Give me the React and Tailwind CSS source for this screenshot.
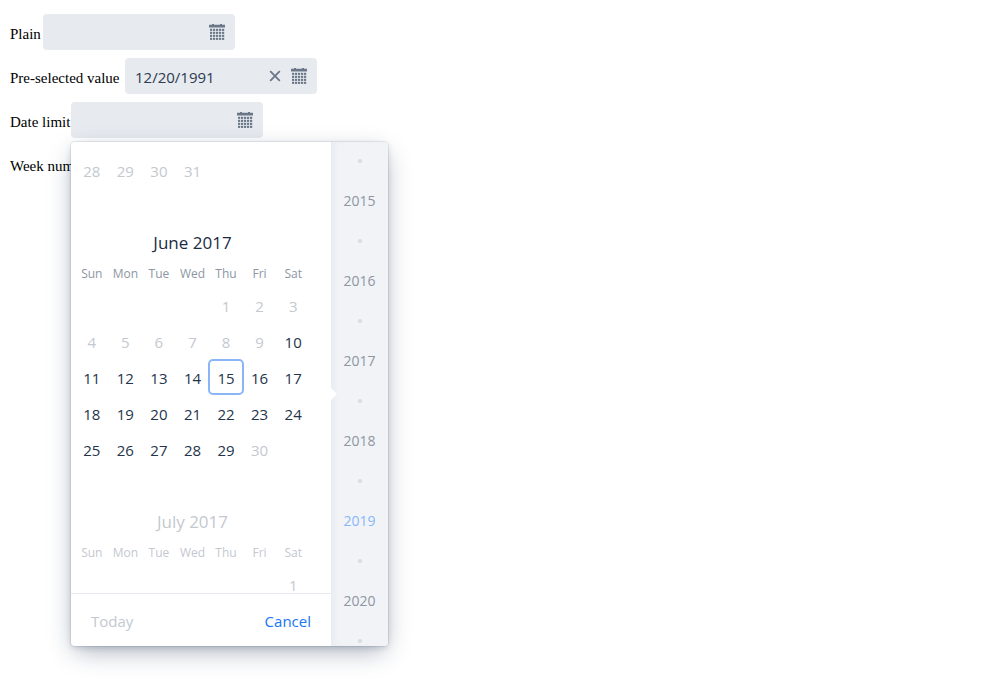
import { useState } from "react";

const WEEKDAYS = ["Sun", "Mon", "Tue", "Wed", "Thu", "Fri", "Sat"];

const MAY = [[28, 29, 30, 31, null, null, null]];
const JUNE = [
  [null, null, null, null, 1, 2, 3],
  [4, 5, 6, 7, 8, 9, 10],
  [11, 12, 13, 14, 15, 16, 17],
  [18, 19, 20, 21, 22, 23, 24],
  [25, 26, 27, 28, 29, 30, null],
];
const JULY = [[null, null, null, null, null, null, 1]];
const YEARS = [2015, 2016, 2017, 2018, 2019, 2020];

function CalendarIcon() {
  const cols = [1, 4, 7, 10, 13];
  const rows = [4.8, 7.8, 10.8, 13.8];
  return (
    <svg width="16" height="16" viewBox="0 0 16 16" fill="currentColor" aria-hidden="true">
      <path d="M0 .8h3V0h2v.8h6V0h2v.8h3v2.8H0z" />
      {rows.map((y) => cols.map((x) => <rect key={`${x}-${y}`} x={x} y={y} width="2.2" height="2.1" />))}
    </svg>
  );
}

function DateField({ id, label, labelWidth, initial = "", children }) {
  const [value, setValue] = useState(initial);
  return (
    <div className="flex items-baseline gap-1">
      <label
        htmlFor={id}
        className={`whitespace-nowrap font-['Liberation_Serif',serif] text-[15px] leading-5 text-black ${labelWidth}`}
      >
        {label}
      </label>
      <div className="relative flex h-9 w-48 items-center rounded bg-[#e7eaef] px-2.5 text-[#6b7789]">
        <input
          id={id}
          type="text"
          value={value}
          onChange={(e) => setValue(e.target.value)}
          className="min-w-0 flex-1 bg-transparent pt-0.5 text-[15px] leading-6 text-[#2c3b50] outline-none"
        />
        {value && (
          <button type="button" aria-label="Clear" onClick={() => setValue("")} className="mr-2.5">
            <svg width="12" height="12" viewBox="0 0 12 12" fill="none" stroke="currentColor" strokeWidth="1.8" aria-hidden="true">
              <path d="M1.2 1.2l9.6 9.6M10.8 1.2l-9.6 9.6" />
            </svg>
          </button>
        )}
        <button type="button" aria-label="Open calendar">
          <CalendarIcon />
        </button>
        {children}
      </div>
    </div>
  );
}

function Month({ title, weeks, isEnabled, today, muted }) {
  return (
    <section className="mb-11 w-[235px]">
      {title && (
        <h2 className={`mb-[7px] text-center text-[17px] leading-[22px] ${muted ? "text-[#c4c8cf]" : "text-[#1b2b41]"}`}>
          {title}
        </h2>
      )}
      <table className="w-full table-fixed border-collapse">
        {title && (
          <thead>
            <tr className={`h-[26px] text-xs ${muted ? "text-[#c4c8cf]" : "text-[#8d96a3]"}`}>
              {WEEKDAYS.map((d) => (
                <th key={d} scope="col" className="p-0 font-normal">
                  {d}
                </th>
              ))}
            </tr>
          </thead>
        )}
        <tbody>
          {weeks.map((week, i) => (
            <tr key={i} className="h-9">
              {week.map((day, j) => (
                <td key={j} className="p-0">
                  {day && (
                    <div className="flex justify-center">
                      <button
                        type="button"
                        disabled={!isEnabled(day)}
                        className={`h-9 w-9 shrink-0 rounded-[5px] border-2 pt-0.5 text-[15px] ${
                          day === today ? "border-[#8ab6f8]" : "border-transparent"
                        } ${isEnabled(day) ? "text-[#24344a]" : "text-[#c4c8cf]"}`}
                      >
                        {day}
                      </button>
                    </div>
                  )}
                </td>
              ))}
            </tr>
          ))}
        </tbody>
      </table>
    </section>
  );
}

function YearDot() {
  return (
    <li className="flex h-10 shrink-0 items-center justify-center" aria-hidden="true">
      <span className="h-1 w-1 rounded-full bg-[#d8dbe2]" />
    </li>
  );
}

function DatePickerOverlay() {
  return (
    <div
      role="dialog"
      aria-label="Choose a date"
      className="absolute top-full left-0 z-10 mt-1 flex h-[504px] overflow-hidden rounded bg-white shadow-[0_0_0_1px_rgba(28,48,78,0.08),0_2px_6px_-1px_rgba(28,48,78,0.2),0_8px_24px_-4px_rgba(28,48,78,0.4)]"
    >
      <div className="flex w-[260px] flex-col">
        <div className="min-h-0 flex-1 overflow-hidden pt-2.5 pl-1">
          <Month weeks={MAY} isEnabled={() => false} />
          <Month title="June 2017" weeks={JUNE} isEnabled={(d) => d >= 10 && d < 30} today={15} />
          <Month title="July 2017" weeks={JULY} isEnabled={() => false} muted />
        </div>
        <div className="flex h-[53px] shrink-0 items-center justify-between border-t border-[#e6e9ed] px-5 pt-0.5 text-[15px]">
          <button type="button" disabled className="text-[#c4c8cf]">
            Today
          </button>
          <button type="button" className="text-[#1676f3]">
            Cancel
          </button>
        </div>
      </div>
      <div className="relative flex w-[57px] flex-col justify-center overflow-hidden bg-[#f1f3f7] shadow-[inset_6px_0_8px_-4px_rgba(28,48,78,0.05)]">
        <ul className="h-[506px] shrink-0 text-sm text-[#8d96a3]">
          <YearDot />
          {YEARS.map((year) => [
            <li key={year} className="flex h-10 items-center justify-center">
              <button type="button" className={year === 2019 ? "text-[#8ab6f8]" : ""}>
                {year}
              </button>
            </li>,
            <YearDot key={`${year}-dot`} />,
          ])}
        </ul>
        <span className="absolute top-1/2 left-0 -translate-y-1/2 border-y-6 border-l-6 border-y-transparent border-l-white" />
      </div>
    </div>
  );
}

export default function App() {
  return (
    <main className="flex min-h-screen flex-col gap-2 px-2.5 py-3.5 font-['Open_Sans','Noto_Sans',sans-serif]">
      <DateField id="plain" label="Plain" labelWidth="w-[29px]" />
      <DateField id="preselected" label="Pre-selected value" labelWidth="w-[111px]" initial="12/20/1991" />
      <DateField id="limit" label="Date limit" labelWidth="w-[57px]">
        <DatePickerOverlay />
      </DateField>
      <DateField id="weeks" label="Week numbers" labelWidth="w-[87px]" />
    </main>
  );
}
